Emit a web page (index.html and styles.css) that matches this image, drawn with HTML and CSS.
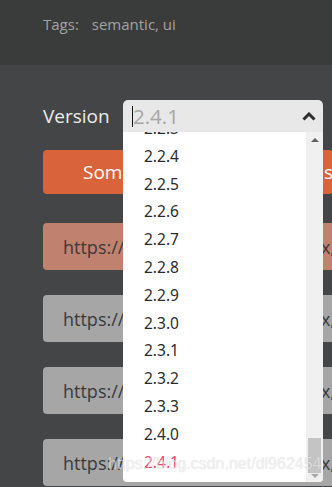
FILE: index.html
```html
<!DOCTYPE html>
<html>
	<head>
		<meta charset="UTF-8">
		<title>Version</title>
		<link rel="stylesheet" href="styles.css">
	</head>
	<body>
		<div class="header">
			<span class="tags-label">Tags:</span>
			<span class="tags">semantic, ui</span>
		</div>
		<div class="main">
			<div class="version-row">
				<label class="version-label">Version</label>
				<div class="select">
					<div class="select-box">
						<span class="caret"></span>
						<span class="select-value">2.4.1</span>
						<svg class="chevron" width="14" height="9" viewBox="0 0 14 9">
							<path d="M1.5 7.5 L7 2 L12.5 7.5" fill="none" stroke="#2e2e2e" stroke-width="3"/>
						</svg>
					</div>
					<div class="dropdown">
						<div class="options">
							<div class="option">2.2.3</div>
							<div class="option">2.2.4</div>
							<div class="option">2.2.5</div>
							<div class="option">2.2.6</div>
							<div class="option">2.2.7</div>
							<div class="option">2.2.8</div>
							<div class="option">2.2.9</div>
							<div class="option">2.3.0</div>
							<div class="option">2.3.1</div>
							<div class="option">2.3.2</div>
							<div class="option">2.3.3</div>
							<div class="option">2.4.0</div>
							<div class="option selected">2.4.1</div>
						</div>
						<div class="scrollbar">
							<span class="arrow-up"></span>
							<span class="thumb"></span>
							<span class="arrow-down"></span>
						</div>
					</div>
				</div>
			</div>
			<div class="btn"><span>Some</span><span>s</span></div>
			<div class="links">
				<div class="link active"><span>https://</span><span>x,</span></div>
				<div class="link"><span>https://</span><span>x,</span></div>
				<div class="link"><span>https://</span><span>x,</span></div>
				<div class="link"><span>https://</span><span>x,</span></div>
			</div>
		</div>
		<div class="watermark">https://blog.csdn.net/dl962454</div>
	</body>
</html>
```
FILE: styles.css
```css
*{margin: 0;padding: 0;box-sizing: border-box;}
body{background: #444546;font-family: "Open Sans", Lato, sans-serif;overflow: hidden;width: 332px;height: 487px;position: relative;}
.header{height: 65px;background: #3a3b3b;padding: 14px 0 0 43px;color: #a3a3a3;font-size: 15px;}
.tags-label{margin-right: 9px;}
.main{padding: 35px 0 0 43px;}
.version-row{display: flex;align-items: center;height: 32px;position: relative;z-index: 2;}
.version-label{color: #ececec;font-size: 19px;width: 80px;}
.select{position: relative;width: 200px;height: 32px;}
.select-box{height: 32px;background: #e8e8e8;border-radius: 5px 5px 0 0;display: flex;align-items: center;padding: 0 7px 0 9px;}
.caret{width: 1px;height: 21px;background: #111;}
.select-value{color: #a6a6a6;font-size: 20.5px;flex: 1;line-height: 20px;}
.dropdown{position: absolute;top: 32px;left: 0;width: 200px;height: 350px;background: #fff;border-radius: 0 0 4px 4px;overflow: hidden;display: flex;}
.options{flex: 1;margin-top: -17px;font-family: "Noto Sans", "Open Sans", sans-serif;}
.option{height: 27.8px;line-height: 27.8px;padding-left: 21px;font-size: 15.5px;color: #2b2b2b;}
.option.selected{color: #e4466c;}
.scrollbar{width: 17px;background: #f0f0f0;display: flex;flex-direction: column;align-items: center;}
.arrow-up{width: 0;height: 0;border-left: 4px solid transparent;border-right: 4px solid transparent;border-bottom: 4px solid #5f5f5f;margin-top: 6px;}
.thumb{width: 13px;height: 35px;background: #c4c4c4;margin-top: auto;}
.arrow-down{width: 0;height: 0;border-left: 4px solid transparent;border-right: 4px solid transparent;border-top: 4px solid #a8a8a8;margin: 1px 0 4px;}
.btn{margin-top: 18px;width: 290px;height: 44px;background: #d9643b;border-radius: 4px;color: #fff;font-size: 19px;display: flex;align-items: center;justify-content: space-between;padding: 0 0 0 40px;}
.links{margin-top: 29px;display: flex;flex-direction: column;gap: 25px;}
.link{width: 292px;height: 47px;background: #a6a6a6;border-radius: 4px;color: #3a3a3a;font-size: 18px;display: flex;align-items: center;justify-content: space-between;padding: 0 0 0 20px;}
.link.active{background: #c1816f;}
.watermark{position: absolute;left: 108px;top: 455px;font-family: "Liberation Sans", Arial, sans-serif;font-size: 16px;color: rgba(255,255,255,0.6);text-shadow: 0 0 1px rgba(0,0,0,0.18);z-index: 3;}
```
